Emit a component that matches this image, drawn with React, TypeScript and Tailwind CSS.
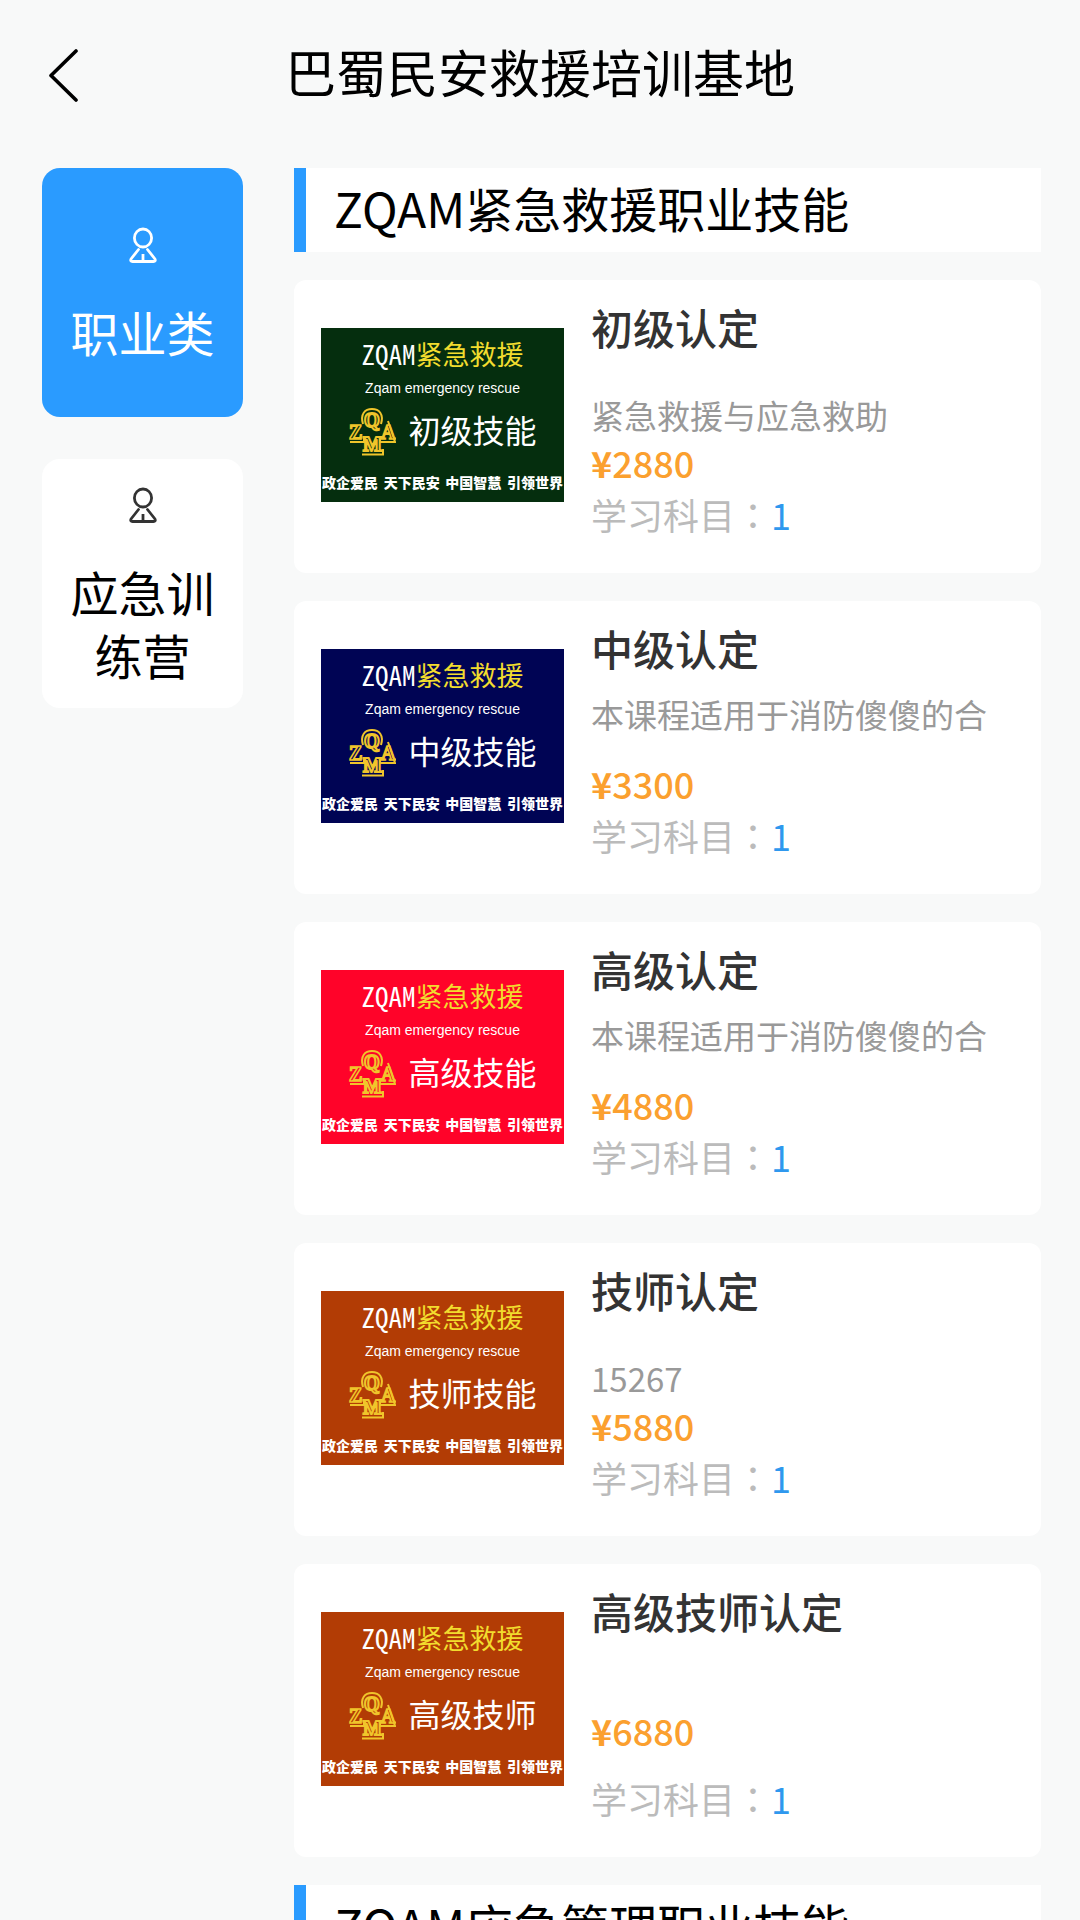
const FONT = "font-['Noto_Sans_CJK_SC',sans-serif]"

const categories = [
  { name: '职业类', active: true },
  { name: '应急训练营', active: false },
]

const courses = [
  { title: '初级认定', desc: '紧急救援与应急救助', price: 2880, subjects: 1, cover: '初级技能', bg: 'bg-[#052e0e]' },
  { title: '中级认定', desc: '本课程适用于消防傻傻的合', price: 3300, subjects: 1, cover: '中级技能', bg: 'bg-[#000454]' },
  { title: '高级认定', desc: '本课程适用于消防傻傻的合', price: 4880, subjects: 1, cover: '高级技能', bg: 'bg-[#ff0329]' },
  { title: '技师认定', desc: '15267', price: 5880, subjects: 1, cover: '技师技能', bg: 'bg-[#b23c05]' },
  { title: '高级技师认定', desc: '', price: 6880, subjects: 1, cover: '高级技师', bg: 'bg-[#b23c05]' },
]

const slogans = ['政企爱民', '天下民安', '中国智慧', '引领世界']

function UserIcon() {
  return (
    <svg className="size-[54px]" viewBox="0 0 54 54" fill="none" stroke="currentColor" strokeWidth="2.8" aria-hidden="true">
      <ellipse cx="27" cy="20" rx="8.6" ry="9" />
      <path d="M22.5 31.5 15 41Q14 43.5 16.5 43.5H37.5Q40 43.5 39 41L31.5 31.5" strokeLinecap="round" strokeLinejoin="round" />
      <path d="M27 36V43" />
    </svg>
  )
}

function Emblem() {
  return (
    <svg
      className="size-12 font-['Liberation_Serif',serif] font-bold"
      viewBox="0 0 48 48"
      fill="none"
      stroke="#f0c52b"
      strokeWidth="1.6"
      aria-hidden="true"
    >
      <path d="M15 16C12 6 17 1 24 1S36 6 33 16" strokeWidth="2" />
      <path d="M2 34H16V29M32 29V34H47L40 13" strokeWidth="2" />
      <path d="M14 46.5H35V41" strokeWidth="2" />
      <text x="1" y="31" fontSize="20">Z</text>
      <text x="33" y="31" fontSize="20">A</text>
      <text x="16" y="19" fontSize="20" strokeWidth="2">Q</text>
      <text x="15" y="43" fontSize="20" strokeWidth="2">M</text>
    </svg>
  )
}

function Cover({ name, bg }: { name: string; bg: string }) {
  return (
    <div className={`flex h-[174px] w-[243px] shrink-0 flex-col items-center overflow-hidden pt-2 text-white ${bg}`}>
      <p className="flex items-center text-[27px] leading-9 text-[#f2dc2e]">
        <span className="font-['Noto_Sans_Mono_CJK_SC','Liberation_Sans',sans-serif] text-white">ZQAM</span>
        紧急救援
      </p>
      <p className="mt-1 font-['Liberation_Sans',sans-serif] text-[14px] leading-6">Zqam emergency rescue</p>
      <div className="mt-2 flex items-start gap-3">
        <Emblem />
        <span className="text-[32px] leading-[42px]">{name}</span>
      </div>
      <p className="mt-4 flex w-full justify-between px-px text-[14px] leading-5 font-black">
        {slogans.map((s) => (
          <span key={s}>{s}</span>
        ))}
      </p>
    </div>
  )
}

function CourseCard({ course }: { course: (typeof courses)[number] }) {
  const long = course.desc.length > 10
  const empty = !course.desc
  return (
    <li className="flex h-[293px] rounded-xl bg-white px-[27px] pt-4">
      <div className="pt-8">
        <Cover name={course.cover} bg={course.bg} />
      </div>
      <div className="ml-[27px] min-w-0 flex-1">
        <h3 className="text-[42px] leading-[62px] font-medium text-[#333]">{course.title}</h3>
        <p
          className={`flex flex-col justify-end text-[33px] leading-[42px] whitespace-nowrap text-[#999] ${
            empty ? 'h-[62px]' : 'h-[78px]'
          } ${long ? 'pb-[22px]' : ''}`}
        >
          {course.desc}
        </p>
        <p className="mt-1 text-[36px] leading-11 font-medium text-[#fba02f]">
          <span className="font-bold">¥</span>
          {course.price}
        </p>
        <p
          className={`font-['Noto_Sans_CJK_TC',sans-serif] text-[36px] leading-[52px] text-[#bbb] ${
            empty ? 'mt-5' : 'mt-1'
          }`}
        >
          学习科目：<span className="text-[#2f98ee]">{course.subjects}</span>
        </p>
      </div>
    </li>
  )
}

function SectionTitle({ children }: { children: string }) {
  return (
    <h2 className="h-[84px] border-l-12 border-[#2a9bff] bg-white pl-7 text-[48px] leading-[78px] whitespace-nowrap">
      {children}
    </h2>
  )
}

export default function App() {
  return (
    <div className={`h-screen overflow-hidden bg-[#f8f9f9] text-black ${FONT}`}>
      <header className="flex h-[148px] items-center px-[42px]">
        <button type="button" aria-label="返回" className="w-12">
          <svg className="h-14 w-11" viewBox="0 0 44 56" fill="none" stroke="currentColor" strokeWidth="3.6" strokeLinecap="round" strokeLinejoin="round">
            <path d="M34 5 9 29.5 34 54" />
          </svg>
        </button>
        <h1 className="flex-1 pb-1.5 text-center text-[51px] leading-[72px]">巴蜀民安救援培训基地</h1>
        <div className="w-12" />
      </header>

      <div className="flex gap-[51px] pt-5 pr-[39px] pl-[42px]">
        <nav className="flex w-[201px] shrink-0 flex-col gap-[42px]">
          {categories.map((c) => (
            <button
              key={c.name}
              type="button"
              className={`flex h-[249px] flex-col items-center justify-center rounded-[18px] px-6 pb-1 ${
                c.active ? 'bg-[#2a9bff] text-white' : 'bg-white'
              }`}
            >
              <span className={c.active ? '' : 'text-[#333]'}>
                <UserIcon />
              </span>
              <span className="mt-7 text-[48px] leading-[63px]">{c.name}</span>
            </button>
          ))}
        </nav>

        <main className="min-w-0 flex-1">
          <SectionTitle>ZQAM紧急救援职业技能</SectionTitle>
          <ul className="my-7 flex flex-col gap-7">
            {courses.map((c) => (
              <CourseCard key={c.title} course={c} />
            ))}
          </ul>
          <SectionTitle>ZQAM应急管理职业技能</SectionTitle>
        </main>
      </div>
    </div>
  )
}
